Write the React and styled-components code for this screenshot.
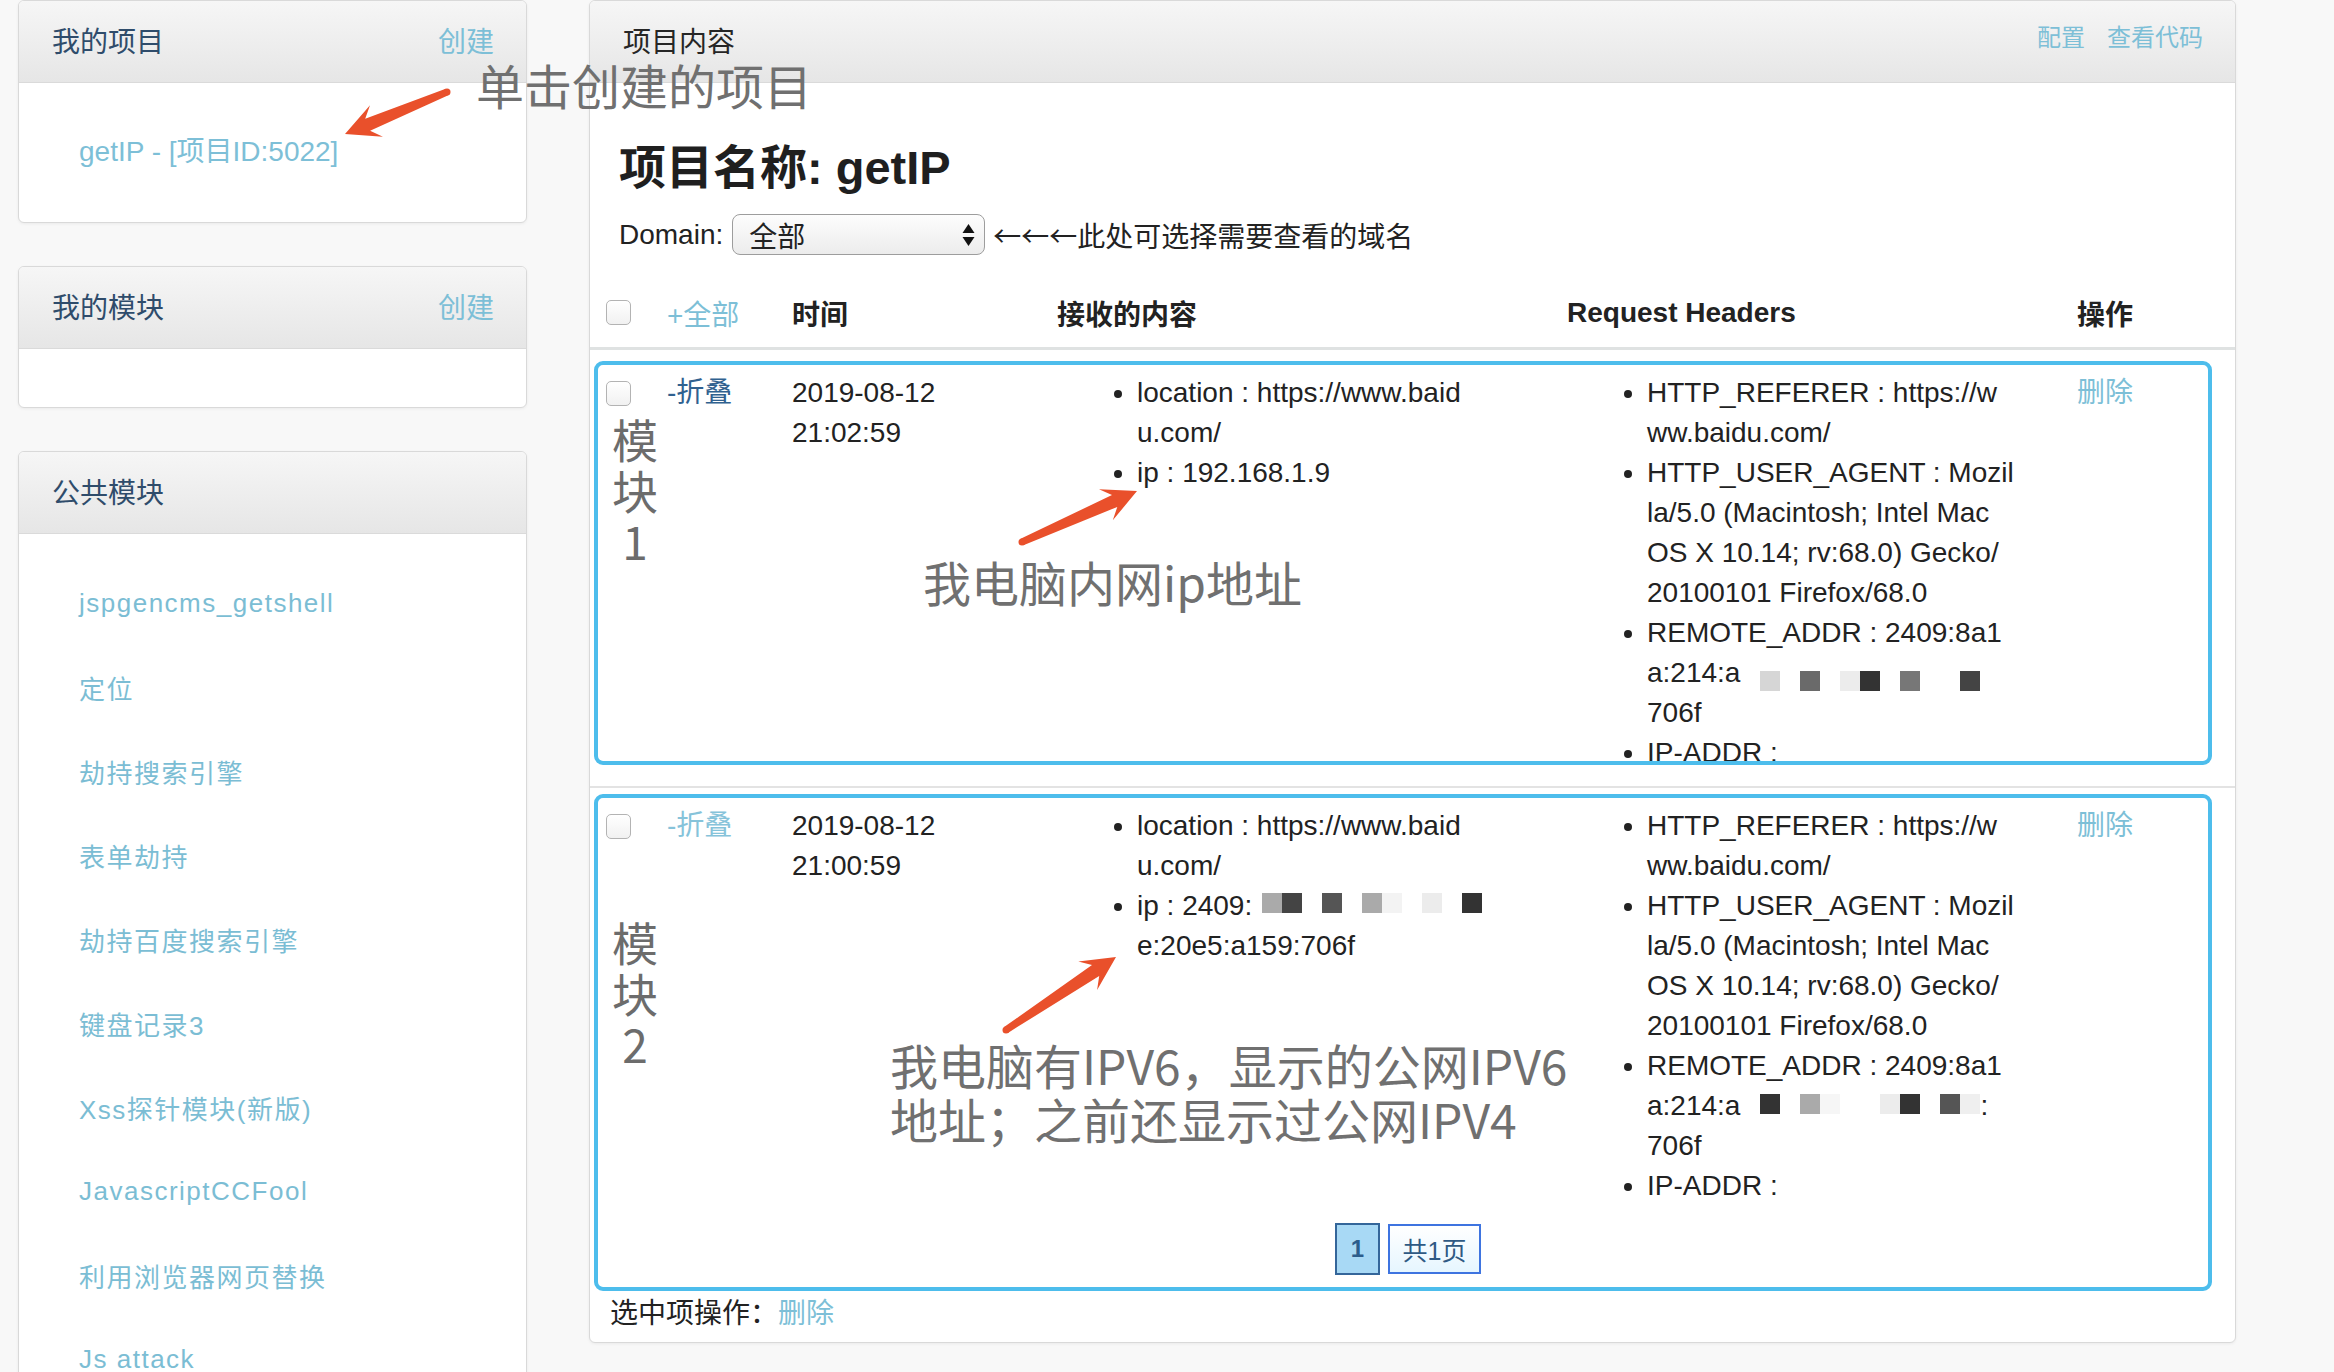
import React from "react";
import styled, { createGlobalStyle } from "styled-components";

const GlobalStyle = createGlobalStyle`
  * { box-sizing: border-box; }
  html, body {
    margin: 0;
    padding: 0;
    height: 1372px;
    overflow: hidden;
    background: #f8f8f8;
  }
  body {
    font-family: "Liberation Sans", "Noto Sans CJK SC", sans-serif;
    color: #222;
  }
`;

const GRID = "69px 125px 265px 510px 510px 1fr";
const LINK = "#7dbfd7";

const Page = styled.div`
  position: relative;
  width: 2334px;
  height: 1372px;
  overflow: hidden;
  display: flex;
  align-items: flex-start;
  gap: 62px;
  padding-left: 18px;
`;

const Sidebar = styled.aside`
  width: 509px;
  flex-shrink: 0;
  display: flex;
  flex-direction: column;
  gap: 43px;
`;

const Panel = styled.section`
  background: #fff;
  border: 1px solid #d9d9d9;
  border-radius: 6px;
  box-shadow: 0 1px 3px rgba(0, 0, 0, 0.06);
  overflow: hidden;
`;

const PanelHead = styled.div`
  height: 82px;
  display: flex;
  align-items: center;
  justify-content: space-between;
  padding: 0 32px 4px 33px;
  background: linear-gradient(#f6f6f6, #e6e6e6);
  border-bottom: 1px solid #dadada;
  font-size: 28px;
  color: ${(p) => (p.$plain ? "#262626" : "#2f4c6b")};
`;

const Link = styled.a`
  color: ${(p) => p.$color || LINK};
  text-decoration: none;
  cursor: pointer;
`;

const ProjectBody = styled.div`
  padding: 49px 0 50px 60px;
  font-size: 28px;
  line-height: 40px;
`;

const EmptyBody = styled.div`
  height: 58px;
`;

const ModuleList = styled.ul`
  list-style: none;
  margin: 0;
  padding: 27px 0 0 60px;
`;

const ModuleItem = styled.li`
  height: 84px;
  display: flex;
  align-items: center;
  font-size: 26px;
  letter-spacing: 1.5px;
  color: #7bbdd4;
`;

const Main = styled(Panel)`
  width: 1647px;
  flex-shrink: 0;
`;

const HeadLinks = styled.div`
  display: flex;
  gap: 22px;
  font-size: 24px;
  padding-bottom: 8px;
`;

const Title = styled.h1`
  margin: 57px 0 0 29px;
  font-size: 47px;
  line-height: 56px;
  font-weight: 700;
  color: #1f1f1f;
`;

const DomainRow = styled.div`
  margin: 18px 0 0 29px;
  display: flex;
  align-items: center;
  gap: 9px;
  font-size: 28px;
`;

const Select = styled.div`
  width: 253px;
  height: 41px;
  border: 1.5px solid #9d9d9d;
  border-radius: 8px;
  background: linear-gradient(#fdfdfd, #ececec);
  display: flex;
  align-items: center;
  justify-content: space-between;
  padding: 0 9px 0 16px;
  font-size: 28px;
`;

const Hint = styled.span`
  margin-left: -1px;
  font-family: "Noto Sans CJK SC", sans-serif;
  font-size: 28px;
`;

const HeadRow = styled.div`
  display: grid;
  grid-template-columns: ${GRID};
  align-items: center;
  height: 72px;
  margin-top: 23px;
  padding-left: 8px;
  border-bottom: 3px solid #dfe2e2;
  font-size: 28px;
  font-weight: 700;
`;

const HeadLink = styled(Link)`
  font-weight: 400;
`;

const Checkbox = styled.span`
  display: block;
  width: 25px;
  height: 25px;
  margin-left: 8px;
  margin-top: ${(p) => p.$top || 0}px;
  border: 1px solid #b3b3b3;
  border-radius: 5px;
  background: linear-gradient(#ffffff, #f1f1f1);
`;

const Record = styled.div`
  padding: ${(p) => (p.$first ? "11px 23px 21px 4px" : "6px 23px 0 4px")};
  border-top: ${(p) => (p.$first ? "none" : "2px solid #e3e3e3")};
`;

const Box = styled.div`
  position: relative;
  border: 4px solid #4dbdec;
  border-radius: 9px;
  padding: 8px 0 12px 0;
  height: ${(p) => (p.$height ? `${p.$height}px` : "auto")};
  overflow: hidden;
`;

const RecordGrid = styled.div`
  display: grid;
  grid-template-columns: ${GRID};
  align-items: start;
  font-size: 28px;
  line-height: 40px;
  color: #222;
`;

const Line = styled.span`
  display: block;
  white-space: nowrap;
`;

const DataList = styled.ul`
  margin: 0;
  padding-left: 80px;
  list-style: disc;
`;

const SideTag = styled.div`
  position: absolute;
  left: 14px;
  top: ${(p) => p.$top}px;
  width: 46px;
  font-family: "Noto Sans CJK SC", sans-serif;
  font-size: 46px;
  line-height: 51px;
  color: #6c6c6c;
  text-align: center;
`;

const MosaicRow = styled.span`
  display: inline-flex;
  vertical-align: ${(p) => p.$shift}px;
  margin-left: ${(p) => p.$gap || 0}px;
`;

const Cell = styled.span`
  width: 20px;
  height: 20px;
  background: ${(p) => p.$c || "transparent"};
`;

const Pager = styled.div`
  display: flex;
  justify-content: center;
  gap: 8px;
  margin-top: 17px;
  padding-left: 10px;
`;

const PageNum = styled.span`
  width: 45px;
  height: 52px;
  display: flex;
  align-items: center;
  justify-content: center;
  border: 2px solid #34669a;
  background: #a8d9f5;
  color: #2c5d8c;
  font-size: 24px;
  font-weight: 700;
`;

const PageTotal = styled.span`
  width: 93px;
  height: 50px;
  margin-top: 1px;
  display: flex;
  align-items: center;
  justify-content: center;
  border: 2px solid #3e74e0;
  background: linear-gradient(#ffffff, #e6f6ff);
  color: #2f5a84;
  font-size: 25px;
`;

const Footer = styled.div`
  margin-top: 3px;
  padding: 0 0 8px 20px;
  font-size: 28px;
  line-height: 40px;
`;

const Overlay = styled.svg`
  position: absolute;
  left: 0;
  top: 0;
  pointer-events: none;
`;

const Note = styled.div`
  position: absolute;
  left: ${(p) => p.$x}px;
  top: ${(p) => p.$y}px;
  font-family: "Noto Sans CJK SC", sans-serif;
  font-size: 48px;
  line-height: 54px;
  color: #707070;
  white-space: nowrap;
  pointer-events: none;
`;

function Mosaic({ cells, shift, gap }) {
  return (
    <MosaicRow $shift={shift} $gap={gap}>
      {cells.map((c, i) => (
        <Cell key={i} $c={c} />
      ))}
    </MosaicRow>
  );
}

function arrowPoints(x1, y1, x2, y2) {
  const dx = x2 - x1;
  const dy = y2 - y1;
  const len = Math.hypot(dx, dy);
  const ux = dx / len;
  const uy = dy / len;
  const nx = -uy;
  const ny = ux;
  const head = 34;
  const pt = (bx, by, along, side) => [bx + ux * along + nx * side, by + uy * along + ny * side];
  const pts = [
    pt(x1, y1, 0, 3.5),
    pt(x2, y2, -head * 0.72, 6.5),
    pt(x2, y2, -head, 17),
    [x2, y2],
    pt(x2, y2, -head, -17),
    pt(x2, y2, -head * 0.72, -6.5),
    pt(x1, y1, 0, -3.5),
  ];
  return pts.map((p) => p.map((v) => v.toFixed(1)).join(",")).join(" ");
}

const arrows = [
  [447, 92, 345, 134],
  [1022, 542, 1137, 491],
  [1006, 1030, 1116, 957],
];

const modules = [
  "jspgencms_getshell",
  "定位",
  "劫持搜索引擎",
  "表单劫持",
  "劫持百度搜索引擎",
  "键盘记录3",
  "Xss探针模块(新版)",
  "JavascriptCCFool",
  "利用浏览器网页替换",
  "Js attack",
];

const agentLines = [
  "HTTP_USER_AGENT : Mozil",
  "la/5.0 (Macintosh; Intel Mac",
  "OS X 10.14; rv:68.0) Gecko/",
  "20100101 Firefox/68.0",
];

const records = [
  {
    id: 1,
    first: true,
    visited: true,
    date: "2019-08-12",
    time: "21:02:59",
    height: 404,
    tagTop: 48,
    tag: ["模", "块", "1"],
    content: [
      ["location : https://www.baid", "u.com/"],
      ["ip : 192.168.1.9"],
    ],
    headers: [
      ["HTTP_REFERER : https://w", "ww.baidu.com/"],
      agentLines,
      [
        "REMOTE_ADDR : 2409:8a1",
        <>
          a:214:a
          <Mosaic
            shift={-9}
            cells={["", "#d6d6d6", "", "#6a6a6a", "", "#ececec", "#333", "", "#777", "", "", "#444"]}
          />
        </>,
        "706f",
      ],
      ["IP-ADDR :"],
    ],
  },
  {
    id: 2,
    first: false,
    visited: false,
    date: "2019-08-12",
    time: "21:00:59",
    tagTop: 118,
    tag: ["模", "块", "2"],
    pager: true,
    content: [
      ["location : https://www.baid", "u.com/"],
      [
        <>
          ip : 2409:
          <Mosaic
            shift={2}
            gap={10}
            cells={["#aaa", "#444", "", "#555", "", "#aaa", "#f3f3f3", "", "#ececec", "", "#333"]}
          />
        </>,
        "e:20e5:a159:706f",
      ],
    ],
    headers: [
      ["HTTP_REFERER : https://w", "ww.baidu.com/"],
      agentLines,
      [
        "REMOTE_ADDR : 2409:8a1",
        <>
          a:214:a
          <Mosaic
            shift={1}
            cells={["", "#333", "", "#aaa", "#f6f6f6", "", "", "#ececec", "#333", "", "#555", "#efefef"]}
          />
          :
        </>,
        "706f",
      ],
      ["IP-ADDR :"],
    ],
  },
];

function ItemList({ items }) {
  return (
    <DataList>
      {items.map((lines, i) => (
        <li key={i}>
          {lines.map((l, j) => (
            <Line key={j}>{l}</Line>
          ))}
        </li>
      ))}
    </DataList>
  );
}

function SelectArrows() {
  return (
    <svg width="13" height="24" viewBox="0 0 13 24">
      <polygon points="6.5,1 12.5,10 0.5,10" fill="#111" />
      <polygon points="0.5,14 12.5,14 6.5,23" fill="#111" />
    </svg>
  );
}

function RecordBox({ r }) {
  return (
    <Record $first={r.first}>
      <Box $height={r.height}>
        <RecordGrid>
          <Checkbox $top={8} />
          <Link $color={r.visited ? "#30618f" : "#86c3da"}>-折叠</Link>
          <div>
            <Line>{r.date}</Line>
            <Line>{r.time}</Line>
          </div>
          <ItemList items={r.content} />
          <ItemList items={r.headers} />
          <Link>删除</Link>
        </RecordGrid>
        {r.pager && (
          <Pager>
            <PageNum>1</PageNum>
            <PageTotal>共1页</PageTotal>
          </Pager>
        )}
        <SideTag $top={r.tagTop}>
          {r.tag.map((c) => (
            <Line key={c}>{c}</Line>
          ))}
        </SideTag>
      </Box>
    </Record>
  );
}

export default function App() {
  return (
    <Page>
      <GlobalStyle />
      <Sidebar>
        <Panel>
          <PanelHead>
            <span>我的项目</span>
            <Link>创建</Link>
          </PanelHead>
          <ProjectBody>
            <Link>getIP - [项目ID:5022]</Link>
          </ProjectBody>
        </Panel>
        <Panel>
          <PanelHead>
            <span>我的模块</span>
            <Link>创建</Link>
          </PanelHead>
          <EmptyBody />
        </Panel>
        <Panel>
          <PanelHead>
            <span>公共模块</span>
          </PanelHead>
          <ModuleList>
            {modules.map((m) => (
              <ModuleItem key={m}>{m}</ModuleItem>
            ))}
          </ModuleList>
        </Panel>
      </Sidebar>

      <Main>
        <PanelHead $plain>
          <span>项目内容</span>
          <HeadLinks>
            <Link>配置</Link>
            <Link>查看代码</Link>
          </HeadLinks>
        </PanelHead>
        <Title>项目名称: getIP</Title>
        <DomainRow>
          <span>Domain:</span>
          <Select>
            <span>全部</span>
            <SelectArrows />
          </Select>
          <Hint>←←←此处可选择需要查看的域名</Hint>
        </DomainRow>
        <HeadRow>
          <Checkbox />
          <HeadLink>+全部</HeadLink>
          <span>时间</span>
          <span>接收的内容</span>
          <span>Request Headers</span>
          <span>操作</span>
        </HeadRow>
        {records.map((r) => (
          <RecordBox key={r.id} r={r} />
        ))}
        <Footer>
          选中项操作：<Link>删除</Link>
        </Footer>
      </Main>

      <Note $x={476} $y={57}>单击创建的项目</Note>
      <Note $x={923} $y={554}>我电脑内网ip地址</Note>
      <Note $x={890} $y={1037}>
        我电脑有IPV6，显示的公网IPV6
        <br />
        地址；之前还显示过公网IPV4
      </Note>
      <Overlay width="2334" height="1372" viewBox="0 0 2334 1372">
        {arrows.map(([x1, y1, x2, y2], i) => (
          <g key={i} fill="#e9502b">
            <polygon points={arrowPoints(x1, y1, x2, y2)} />
            <circle cx={x1} cy={y1} r="3.5" />
          </g>
        ))}
      </Overlay>
    </Page>
  );
}
